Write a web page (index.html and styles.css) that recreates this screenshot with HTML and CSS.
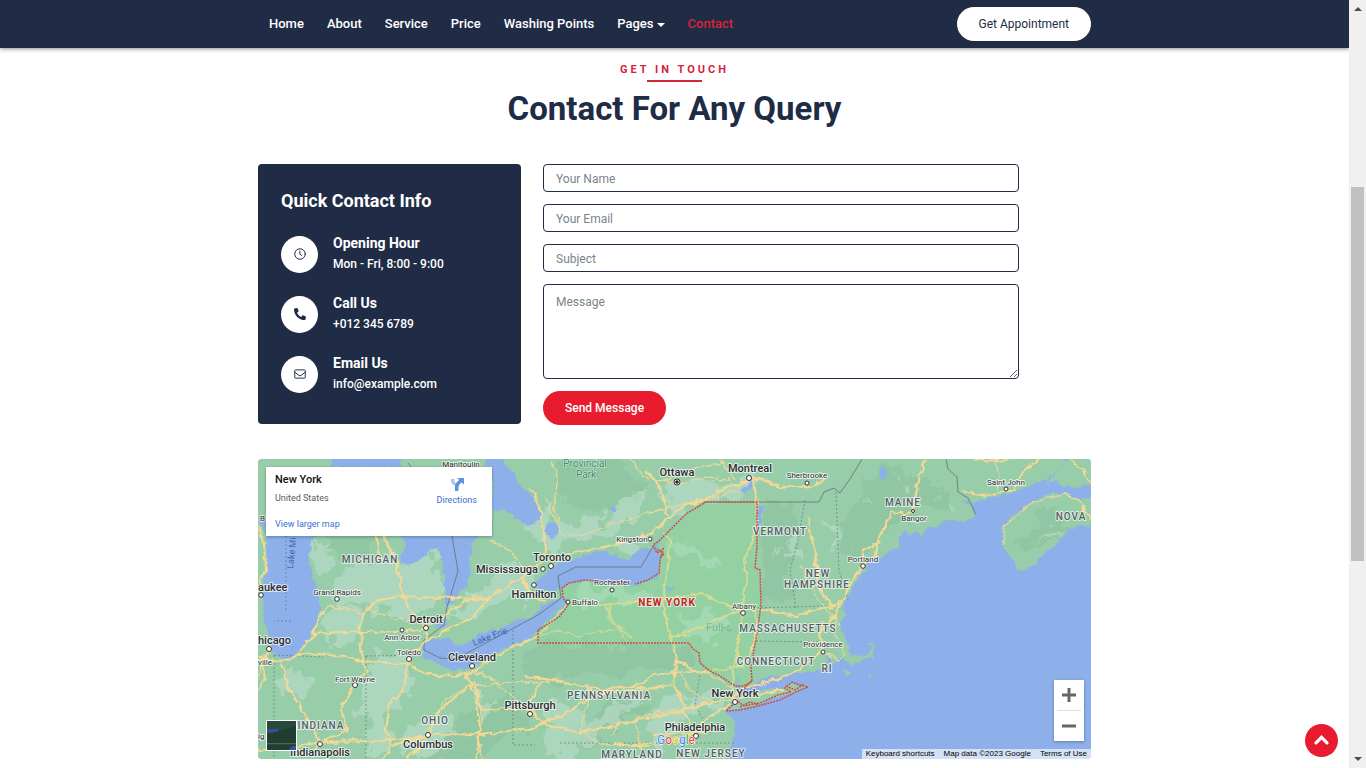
FILE: index.html
```html
<!DOCTYPE html>
<html lang="en">
<head>
<meta charset="utf-8">
<meta name="viewport" content="width=device-width, initial-scale=1">
<title>Contact For Any Query</title>
<link rel="stylesheet" href="styles.css">
</head>
<body>
<div class="page">
  <header class="topbar">
    <div class="container topbar-inner">
      <nav class="nav" aria-label="Main">
        <a href="#home">Home</a>
        <a href="#about">About</a>
        <a href="#service">Service</a>
        <a href="#price">Price</a>
        <a href="#points">Washing Points</a>
        <a href="#pages" class="has-menu">Pages</a>
        <a href="#contact" class="active">Contact</a>
      </nav>
      <a class="pill pill-light" href="#appointment">Get Appointment</a>
    </div>
  </header>

  <main class="container">
    <div class="section-head">
      <p class="eyebrow">Get In Touch</p>
      <h1>Contact For Any Query</h1>
    </div>

    <div class="contact">
      <section class="info">
        <h2>Quick Contact Info</h2>
        <ul class="info-list">
          <li>
            <span class="disc"><svg viewBox="0 0 16 16" fill="none" stroke="currentColor" stroke-width="1.300" stroke-linecap="round"><circle cx="8" cy="8" r="7"/><path d="M7.800 4v4.200l2.400 1.600"/></svg></span>
            <div><h3>Opening Hour</h3><p>Mon - Fri, 8:00 - 9:00</p></div>
          </li>
          <li>
            <span class="disc"><svg viewBox="0 0 512 512" fill="currentColor"><path d="M18.600 24.300L122.600 .3c11.300-2.600 22.900 3.300 27.500 13.900l48 112c4.200 9.800 1.400 21.300-6.900 28l-60.600 49.600c36 76.700 98.900 140.500 177.200 177.200l49.600-60.600c6.800-8.300 18.200-11.100 28-6.900l112 48C508 366.100 513.900 377.700 511.300 389l-24 104C484.800 503.800 475.200 512 464 512 207.900 512 0 304.500 0 48c0-11.200 7.700-20.800 18.600-23.700z"/></svg></span>
            <div><h3>Call Us</h3><p>+012 345 6789</p></div>
          </li>
          <li>
            <span class="disc"><svg viewBox="0 0 16 16" fill="none" stroke="currentColor" stroke-width="1.300" stroke-linejoin="round"><rect x="1" y="2.500" width="14" height="11" rx="1"/><path d="M1 5.500l5.600 4.400q1.400 1 2.800 0L15 5.500"/></svg></span>
            <div><h3>Email Us</h3><p>info@example.com</p></div>
          </li>
        </ul>
      </section>

      <form class="form">
        <input class="field" type="text" placeholder="Your Name" aria-label="Your Name">
        <input class="field" type="email" placeholder="Your Email" aria-label="Your Email">
        <input class="field" type="text" placeholder="Subject" aria-label="Subject">
        <textarea class="field field-area" placeholder="Message" aria-label="Message"></textarea>
        <button class="pill pill-red" type="submit">Send Message</button>
      </form>
    </div>

    <section class="map" aria-label="Map of New York">
      <svg class="map-canvas" viewBox="258 459 833 300" preserveAspectRatio="xMidYMid slice" role="img" aria-label="New York, United States">
        <defs>
          <!-- roughens straight edges into natural shorelines and terrain -->
          <filter id="shore" x="-5%" y="-5%" width="110%" height="110%" color-interpolation-filters="sRGB"><feTurbulence type="fractalNoise" baseFrequency="0.12" numOctaves="3" seed="4"/><feDisplacementMap in="SourceGraphic" scale="7" xChannelSelector="R" yChannelSelector="G"/></filter>
          <filter id="terrain" x="-5%" y="-5%" width="110%" height="110%" color-interpolation-filters="sRGB"><feTurbulence type="fractalNoise" baseFrequency="0.05" numOctaves="4" seed="9"/><feDisplacementMap in="SourceGraphic" scale="38" xChannelSelector="R" yChannelSelector="G"/></filter>
          <clipPath id="inland"><path d="M240 440H1066L1042 482 1004 496 985 499 976 517 937 526 917 530 899 547 882 557 866 568 853 588 842 609 843 634 849 655 827 666 780 674 745 688 726 712 735 719 735 732 727 780H240ZM1003 547L1001 535 1013 515 1050 494 1091 491V524L1066 531 1026 571 1015 564Z"/></clipPath>
        </defs>
        <rect class="water" x="258" y="459" width="833" height="300"/>
        <!-- mainland -->
        <g class="land" filter="url(#shore)">
          <path d="M240 440H1076L1066 459 1058 469 1042 482 1024 488 1004 496 985 499 972 504 962 499 971 507 976 517 966 519 952 523 944 521 937 528 928 526 922 534 917 531 910 535 904 531 899 539 899 549 888 550 882 558 873 557 866 568 860 575 853 588 846 598 842 609 848 615 839 624 843 634 849 645 850 657 866 654 872 649 868 642 873 645 874 657 860 660 851 665 846 659 840 654 836 663 827 668 812 671 798 674 776 676 761 680 748 688 735 698 726 712 735 719 735 732 730 748 727 780H240Z"/>
          <path d="M1003 547L1001 535 1004 525 1013 515 1031 503 1050 494 1066 493 1080 500 1110 491V524L1076 526 1066 531 1059 542 1043 555 1034 563 1026 571 1018 572 1015 564ZM1110 440V483L1072 488 1060 483 1045 482 1056 471 1068 459 1072 440Z"/>
        </g>
        <!-- shaded terrain -->
        <g clip-path="url(#inland)">
        <g class="forest" filter="url(#terrain)">
          <path d="M572 459H620L640 480 655 496 638 502 600 512 580 507 555 490 548 470ZM535 645L685 643 694 668 672 675 650 668 620 680 590 674 540 681 520 670ZM764 502L795 503 790 540 784 575 788 600 768 610 762 580ZM870 475L900 468 940 480 940 508 900 524 850 560 845 530Z"/>
          <path d="M315 515L382 530 376 550 340 560 326 548ZM460 715L515 690 525 720 480 759 430 759ZM590 715L640 690 655 700 590 750 565 759 560 740ZM1010 540L1050 510 1070 520 1050 545 1025 560Z"/>
        </g>
        <g class="pale" filter="url(#terrain)">
          <path d="M330 575L382 558 397 566 424 553 438 551 442 580 432 603 402 617 374 606 338 611 324 594ZM322 610L366 615 370 630 322 647ZM367 660L407 650 416 663 405 695 388 710 386 745 366 757 364 700ZM313 550L322 540 328 556 322 572 314 568ZM480 585L512 561 530 569 524 593 492 607 465 620 454 616ZM614 543L640 538 635 556 622 554Z"/>
          <path d="M520 520L550 504 560 525 600 519 620 500 653 492 640 512 612 530 566 545 535 540ZM656 492L700 473 727 484 753 475 748 500 706 500 680 513ZM570 592L612 584 653 587 655 602 610 601 588 607ZM665 548L684 540 714 552 725 570 702 560ZM550 700L600 720 640 686 646 697 603 735 570 759H552ZM648 715L668 696 711 690 720 702 680 720 662 749 647 759ZM273 682L300 668 307 689 293 704ZM414 727L444 716 452 740 433 759H405ZM775 548L798 540 806 558 790 555Z"/>
          <path d="M1035 546L1040 536 1050 538 1064 521 1048 530ZM895 477L910 485 902 489ZM940 505L947 513 943 520ZM866 496L875 499 872 504ZM825 520L842 537 838 548ZM676 618L721 614 736 631 714 640 690 632ZM465 700L488 697 498 710 482 717Z"/>
        </g>
        </g>
        <!-- lakes -->
        <g class="water" filter="url(#shore)">
          <path d="M266 530L267 560 264 590 263 615 269 636 272 652 279 659 292 658 304 648 313 632 319 614 319 594 312 575 309 556 311 542 318 530Z"/>
          <path d="M258 520H266V535L260 520ZM400 530L405 545 399 563 405 567 417 562 429 550 438 548 442 558 445 586 445 606 454 600 462 592 471 577 469 558 473 544 479 532 492 512 503 510 516 518 529 526 535 523 538 514 537 504 528 492 518 484 514 473 506 466 497 450H485V467H400V450H330V467H420L450 467 492 467V536Z"/>
          <path d="M421 658L422 645 430 638 448 639 460 646 471 642 478 634 499 629 520 620 532 617 542 606 556 600 569 598 561 611 547 621 538 630 527 639 510 646 491 655 472 668 450 671 434 661ZM437 620L448 619 444 628 434 629Z"/>
          <path d="M535 586L543 577 551 567 565 561 588 555 608 550 618 558 629 559 635 550 650 548 662 538 658 549 664 555 659 566 660 575 650 579 639 586 605 584 585 580 567 586 551 592 536 588Z"/>
          <path d="M530 501L537 508 542 517 534 519ZM547 523L558 523 559 532 551 538 545 532ZM757 505H764L761 522 756 533 755 515ZM740 490L752 481 755 486 745 494ZM664 588L675 586 671 593ZM881 463L886 472 884 481 880 472ZM737 676H739V693L736 692ZM610 506L616 508 611 512ZM821 566L827 571 824 574ZM827 651L831 661 825 666Z"/>
        </g>
        <path class="land" d="M843 669L852 673 846 676ZM868 674L873 676 869 678ZM726 711L744 696 766 689 783 689 790 683 798 686 810 685 792 693 770 699 755 706Z"/>
        <!-- thin regional borders -->
        <g class="border-dash">
          <path d="M274 655V759M274 655L323 657M366 656V759M366 656L421 655M513 630V745H535M560 743H735M836 492L839 570 848 600M753 608L825 606M752 641L820 642M805 500L798 540 790 570 796 610M700 675L695 705 711 735M291 621H274M286 536V610"/>
        </g>
        <g class="border">
          <path d="M408 463L414 470M452 536L458 571 447 607 444 625 424 640 424 650 440 658 456 659 538 615 561 598 558 576 576 567H641L654 545M703 502H819L824 492 834 488 840 493 850 479 862 459M946 459L948 469 957 477 958 492 968 498 976 515"/>
        </g>
        <!-- secondary roads -->
        <g class="road road-thin" filter="url(#shore)">
          <path d="M545 498L556 520 562 535 580 536 600 528 640 515 680 505 740 490M660 480L680 484 700 478 730 479M530 575L520 565 512 552 490 540M551 459L558 480 553 505 560 522M630 459L640 473 654 480 672 479 690 470 722 463 735 480M258 677L264 655M320 612L330 607 350 609 365 615M366 607L395 619 430 620M606 605L612 622 635 641M538 639L555 630 580 637 600 631 625 628M612 602L608 616 620 630 627 642M610 602L608 620"/>
          <path d="M675 670L710 673 735 690M680 672L690 690 720 705M674 685L630 690 590 694M590 694L585 710 581 731M581 731L600 745 660 744 704 730M610 737L618 725 650 714 700 706M637 724L643 759M466 672L487 675 499 686 513 697 526 709M470 686L500 684 510 682H550M476 686L482 710 479 740 482 759M468 686L446 700 427 731M820 603L833 615 839 625M822 621L820 640M810 640L823 651 832 659M833 630L842 645 846 655 838 660 824 651"/>
          <path d="M1003 545L1003 528 1012 519 1030 504 1050 497 1065 493M995 459L999 475 997 490M807 516L815 550 820 580 824 600M800 566L808 580 819 600"/>
        </g>
        <!-- highways -->
        <g class="road" filter="url(#shore)">
          <path d="M258 660L281 662 300 655 320 654 345 656 361 661 407 663 421 672 440 676 470 674 492 658 520 644 538 636 560 611 572 601 610 604 662 600 700 593 718 602 742 609 760 610 795 616 810 612 832 606"/>
          <path d="M281 662L290 690 308 720 320 742M320 742L347 731 341 710 356 680 366 672 361 650 360 625 366 610 378 600 400 597 460 598 488 600M320 742L380 741 428 735 480 734 530 729 570 711 595 694 640 689 665 688M428 735L392 745 383 759M320 742L290 748 258 750M275 738L300 725M428 735L439 712 465 689 476 680"/>
          <path d="M313 634L340 632 374 632 420 630 433 622 455 609 475 595 487 600 500 590 517 580 535 568 544 560 556 558 590 550 625 542 653 533 668 517 686 505 705 500 718 491 740 484 754 478 785 487 807 487 825 480"/>
          <path d="M530 487L538 500 544 530 545 556M662 534L670 540 668 565 663 590 664 610 670 637 677 660 673 682 681 700 690 724M677 660L695 672 720 670 745 665 752 650 757 625 753 608M674 672L655 675 640 685 605 690 590 688 550 680 525 676"/>
          <path d="M380 530L388 545 397 562 401 585 408 607 425 628 427 640 411 655 407 663 404 690 390 702 386 730 392 745M324 610L313 634 300 652M466 675L482 710 500 709 530 709 545 725 580 732 610 727 638 720 672 713 705 704 732 700"/>
          <path d="M732 700L758 694 784 690M732 700L740 690 760 684 780 678 799 670 823 650 820 632 835 615 840 604 850 586 861 567 875 555 878 540 893 511 913 513M912 513L919 480 925 459M732 700L733 672 739 640 742 611M742 609L747 580 744 560 755 535 757 505 754 480M690 735L708 718 732 704M810 530L815 555 819 588 832 608 840 603"/>
          <path d="M258 525L264 545 266 570 258 592M258 656L274 660M269 650L262 665 265 678 258 690M320 742L310 759M427 736L417 750 405 759M476 683L479 730 477 759M654 735L690 733 710 731M670 637L700 628 725 616 742 609M541 682L525 709M862 567L862 550 880 543M962 492L985 496 1000 493 1015 489 1019 475 1040 459M1065 493L1080 502 1091 520M1070 459L1080 468 1091 482M970 459L1000 461 1010 459M667 515L660 487 646 470"/>
          <path d="M376 530L381 560M486 601L475 616 448 630 427 640M530 565L522 578 530 595 545 602M615 743L650 747M672 636H688"/>
        </g>
        <!-- New York state -->
        <path class="state-fill" d="M538 630V643H689L700 655 703 668 737 686 752 681 750 650 761 608 757 570 755 545 757 502H706L670 530 655 545 661 560 659 573 640 583 611 584 584 580 563 585 562 600Z"/>
        <path class="state" d="M538 630V643H689L693 649 699 653 700 663 710 671 720 676 735 686 744 686 752 681 751 667 758 627 761 604 760 570 755 568 757 547 757 502H706L686 514 670 530 659 541 653 545 657 553 663 549 660 560 659 573 648 580 635 584M630 584L610 582 584 580 569 583 562 588 563 598 568 605 560 616 548 624 538 630"/>
        <path class="state" d="M737 701L726 711 740 710 758 706 780 700 798 691 808 687 800 685 792 682 785 688 791 692 778 695 760 703 744 706 737 701M657 549L664 554 660 558M752 681L745 687 744 695M740 707L750 702 758 704M786 686L795 690 804 684"/>
        <!-- city markers -->
        <g class="town">
          <circle cx="261" cy="595" r="2.300"/><circle cx="337" cy="599" r="2.300"/><circle cx="269" cy="649" r="2.500"/><circle cx="402" cy="630" r="2"/><circle cx="426" cy="628" r="2.500"/><circle cx="409" cy="659" r="2.500"/><circle cx="355" cy="685" r="2.500"/><circle cx="472" cy="666" r="2.500"/><circle cx="428" cy="735" r="2.500"/><circle cx="320" cy="744" r="2.500"/><circle cx="530" cy="714" r="2.500"/><circle cx="551" cy="566" r="2.500"/><circle cx="543" cy="569" r="2.300"/><circle cx="534" cy="585" r="2.300"/><circle cx="568" cy="602" r="2"/><circle cx="612" cy="590" r="2"/><circle cx="650" cy="539" r="2"/><circle cx="749" cy="478" r="2.500"/><circle cx="807" cy="483" r="2"/><circle cx="743" cy="613" r="2.300"/><circle cx="735" cy="702" r="2.500"/><circle cx="696" cy="736" r="2.500"/><circle cx="823" cy="652" r="2"/><circle cx="863" cy="566" r="2.300"/><circle cx="913" cy="511" r="1.500"/><circle cx="1006" cy="489" r="2"/><circle cx="677" cy="482" r="3"/>
        </g>
        <circle cx="677" cy="482" r="1.800" fill="#222"/>
        <!-- labels -->
        <g class="label region">
          <text x="370" y="563">MICHIGAN</text><text x="321" y="729">INDIANA</text><text x="435" y="724">OHIO</text><text x="609" y="699">PENNSYLVANIA</text><text x="632" y="758">MARYLAND</text><text x="711" y="757">NEW JERSEY</text><text x="780" y="535">VERMONT</text><text x="903" y="506">MAINE</text><text x="818" y="577">NEW</text><text x="817" y="588">HAMPSHIRE</text><text x="788" y="632">MASSACHUSETTS</text><text x="776" y="665">CONNECTICUT</text><text x="827" y="672">RI</text><text x="1071" y="520">NOVA</text>
        </g>
        <g class="label city">
          <text x="677" y="476">Ottawa</text><text x="750" y="472">Montreal</text><text x="552" y="561">Toronto</text><text x="507" y="573">Mississauga</text><text x="534" y="598">Hamilton</text><text x="426" y="623">Detroit</text><text x="472" y="661">Cleveland</text><text x="428" y="748">Columbus</text><text x="320" y="756">Indianapolis</text><text x="530" y="709">Pittsburgh</text><text x="735" y="697">New York</text><text x="695" y="731">Philadelphia</text><text class="from-left" x="258" y="644">hicago</text><text class="from-left" x="258" y="591">aukee</text>
        </g>
        <g class="label small">
          <text x="461" y="467">Manitoulin</text><text x="337" y="595">Grand Rapids</text><text x="402" y="640">Ann Arbor</text><text x="409" y="655">Toledo</text><text x="355" y="682">Fort Wayne</text><text x="632" y="542">Kingston</text><text x="612" y="585">Rochester</text><text x="585" y="605">Buffalo</text><text x="744" y="609">Albany</text><text x="807" y="478">Sherbrooke</text><text x="823" y="647">Providence</text><text x="863" y="562">Portland</text><text x="914" y="521">Bangor</text><text x="1006" y="485">Saint John</text><text class="from-left" x="258" y="665">ville</text><text class="from-left" x="258" y="739">ig</text><text class="from-left" x="260" y="521">B</text>
        </g>
        <g class="park"><text x="585" y="467">Provincial</text><text x="586" y="478">Park</text></g>
        <text class="lake" transform="translate(474 646) rotate(-21)">Lake Erie</text>
        <text class="lake" transform="translate(293 569) rotate(-84)">Lake Mi</text>
        <text class="label ny" x="667" y="606">NEW YORK</text>
        <text class="ghost" x="706" y="631">Full-s</text>
        <text class="google" x="657" y="744"><tspan fill="#4285f4">G</tspan><tspan fill="#ea4335">o</tspan><tspan fill="#fbbc05">o</tspan><tspan fill="#4285f4">g</tspan><tspan fill="#34a853">l</tspan><tspan fill="#ea4335">e</tspan></text>
      </svg>

      <div class="place">
        <div class="place-text">
          <strong>New York</strong>
          <span>United States</span>
          <a href="#larger">View larger map</a>
        </div>
        <a class="directions" href="#directions">
          <svg viewBox="0 0 16 16" width="16" height="16"><path d="M2 3h3.500v2.500Q5.500 7 8 8.500V15H6V9.500Q2 8 2 5z" fill="#a8c7f5"/><path d="M6 15V9.500Q6 8 7.500 6.500L10 4 8.500 2H15v6.500L12.500 6.500 10.500 8.500Q9.500 9.500 9.500 11V15z" fill="#5b93e0"/></svg>
          Directions
        </a>
      </div>

      <button class="satellite" type="button" aria-label="Show satellite imagery">
        <svg viewBox="0 0 28 28"><rect width="28" height="28" fill="#264a38"/><path d="M0 13L28 5V28H0z" fill="#1f3d31"/><path d="M0 8h9l2-1v3l-6 1H0zM22 26l3-2h3v4h-7z" fill="#34529a"/><path d="M0 22h28" stroke="#557a4d"/></svg>
      </button>

      <div class="zoom">
        <button type="button" aria-label="Zoom in"><svg viewBox="0 0 14 14"><path d="M7 0V14M0 7H14"/></svg></button>
        <button type="button" aria-label="Zoom out"><svg viewBox="0 0 14 14"><path d="M0 7H14"/></svg></button>
      </div>

      <div class="credits">
        <button type="button">Keyboard shortcuts</button>
        <span>Map data ©2023 Google</span>
        <a href="#terms">Terms of Use</a>
      </div>
    </section>
  </main>

  <a class="to-top" href="#top" aria-label="Back to top"><svg viewBox="0 0 16 16"><path d="M2.800 10.200L8 5l5.200 5.200"/></svg></a>
</div>

<div class="scrollbar" aria-hidden="true">
  <svg viewBox="0 0 8 4"><path d="M0 4L4 0l4 4z"/></svg>
  <div class="track"><div class="thumb"></div></div>
  <svg viewBox="0 0 8 4"><path d="M0 0h8L4 4z"/></svg>
</div>
</body>
</html>
```
FILE: styles.css
```css
:root {
  --navy: #202c45;
  --red: #e81c2e;
}

* {
  box-sizing: border-box;
}

body {
  display: flex;
  min-height: 100vh;
  margin: 0;
  background: #fff;
  color: var(--navy);
  font: 12px/18px Roboto, "Liberation Sans", sans-serif;
}

h1, h2, h3, p, ul {
  margin: 0;
  padding: 0;
}

a {
  color: inherit;
  text-decoration: none;
}

button {
  border: 0;
  font: inherit;
  cursor: pointer;
}

.page {
  flex: 1;
  min-width: 0;
}

.container {
  width: 100%;
  max-width: 833px;
  margin: 0 auto;
}

/* Top bar */
.topbar {
  background: var(--navy);
  box-shadow: 0 1px 4px rgba(30, 25, 50, 0.5);
}

.topbar-inner {
  display: flex;
  align-items: center;
  justify-content: space-between;
  padding: 7px 0;
}

.nav {
  display: flex;
  gap: 23px;
  padding-left: 11px;
  color: #fff;
  font-size: 13px;
  font-weight: 500;
}

.nav .active {
  color: #dc2336;
}

.has-menu::after {
  content: "";
  display: inline-block;
  margin-left: 3px;
  border: 4px solid transparent;
  border-top-color: currentColor;
  border-bottom: 0;
  vertical-align: middle;
}

.pill {
  padding: 8px 22px;
  border-radius: 17px;
  line-height: 18px;
}

.pill-light {
  background: #fff;
  color: var(--navy);
}

.pill-red {
  align-self: flex-start;
  background: var(--red);
  color: #fff;
  font-weight: 500;
}

/* Heading */
.section-head {
  padding: 12px 0 34px;
  text-align: center;
}

.eyebrow {
  color: #d32638;
  font-size: 11px;
  font-weight: 700;
  letter-spacing: 3px;
  line-height: 20px;
  text-transform: uppercase;
}

.eyebrow::after {
  content: "";
  display: block;
  width: 55px;
  height: 2px;
  margin: 0 auto;
  background: currentColor;
}

h1 {
  padding-top: 6px;
  font-size: 33px;
  font-weight: 700;
  line-height: 42px;
}

/* Contact block */
.contact {
  display: grid;
  grid-template-columns: 263fr 548fr;
  gap: 22px;
  align-items: start;
}

.info {
  padding: 25px 23px 29px;
  border-radius: 4px;
  background: var(--navy);
  color: #fff;
}

.info h2 {
  font-size: 18px;
  font-weight: 700;
  line-height: 24px;
}

.info-list {
  display: grid;
  gap: 18px;
  padding-top: 20px;
  list-style: none;
}

.info-list li {
  display: flex;
  align-items: center;
  gap: 15px;
}

.info-list h3 {
  font-size: 14px;
  font-weight: 700;
  line-height: 21px;
}

.info-list p {
  font-weight: 500;
  line-height: 21px;
}

.disc {
  display: grid;
  place-items: center;
  width: 37px;
  height: 37px;
  border-radius: 50%;
  background: #fff;
  color: var(--navy);
}

.disc svg {
  width: 12px;
  height: 12px;
}

.form {
  display: flex;
  flex-direction: column;
  gap: 12px;
  padding-right: 72px;
}

.field {
  width: 100%;
  height: 28px;
  padding: 1px 12px 0;
  border: 1px solid var(--navy);
  border-radius: 4px;
  background: #fff;
  color: var(--navy);
  font: inherit;
}

.field::placeholder {
  color: #7b838a;
}

.field-area {
  display: block;
  height: 95px;
  padding: 8px 12px;
}

/* Map */
.map {
  position: relative;
  height: 300px;
  margin-top: 34px;
  overflow: hidden;
  border-radius: 4px;
}

.map-canvas {
  display: block;
  width: 100%;
  height: 100%;
}

.water { fill: #8db0ea; }
.land { fill: #98cdaa; }
.forest { fill: #8ec49f; opacity: 0.7; }
.pale { fill: #b7dbc6; opacity: 0.7; }
.state-fill { fill: #84e090; opacity: 0.25; }

.state {
  fill: none;
  stroke: #cf4a45;
  stroke-width: 1.5;
  stroke-dasharray: 2 1;
}

.border,
.border-dash {
  fill: none;
  stroke: #60726f;
  stroke-width: 0.8;
}

.border-dash {
  stroke-dasharray: 2 2;
  opacity: 0.8;
}

.road {
  fill: none;
  stroke: #f5d993;
  stroke-width: 2;
  stroke-linejoin: round;
}

.road-thin {
  stroke: #e8d79a;
  stroke-width: 1.3;
}

.town {
  fill: #fff;
  stroke: #333;
}

.label {
  fill: #2b2d30;
  stroke: rgba(255, 255, 255, 0.7);
  stroke-width: 2px;
  stroke-linejoin: round;
  paint-order: stroke;
  text-anchor: middle;
  font-weight: 500;
}

.region {
  fill: #535e65;
  font-size: 10px;
  letter-spacing: 1px;
}

.city { font-size: 11px; }

.small {
  font-size: 8px;
  font-weight: 400;
}

.from-left { text-anchor: start; }

.ny {
  fill: #c5221f;
  font-size: 10px;
  font-weight: 700;
  letter-spacing: 1px;
}

.park {
  fill: #3e8a63;
  stroke: #d3ebdd;
  stroke-width: 1px;
  paint-order: stroke;
  text-anchor: middle;
  font-size: 10px;
}

.lake {
  fill: #3f68b5;
  font-size: 9px;
}

.ghost {
  fill: #5f8f72;
  opacity: 0.5;
  font-size: 11px;
}

.google {
  stroke: #fff;
  stroke-width: 1px;
  paint-order: stroke;
  font-size: 12px;
}

.place {
  position: absolute;
  top: 8px;
  left: 8px;
  display: flex;
  justify-content: space-between;
  width: 226px;
  padding: 6px 15px 5px 9px;
  background: #fff;
  box-shadow: 0 1px 3px rgba(0, 0, 0, 0.3);
  color: #5b5b5b;
  font-size: 9px;
}

.place-text {
  display: grid;
  line-height: 14px;
}

.place strong {
  padding-bottom: 4px;
  color: #111;
  font-size: 11px;
  font-weight: 500;
}

.place-text a {
  padding-top: 12px;
}

.place a {
  color: #3a6fd0;
}

.directions {
  display: grid;
  align-content: start;
  justify-items: center;
  gap: 2px;
  padding-top: 3px;
  line-height: 12px;
}

.satellite {
  position: absolute;
  bottom: 8px;
  left: 8px;
  width: 31px;
  height: 31px;
  padding: 0;
  border: 1px solid #fff;
}

.satellite svg {
  display: block;
  width: 100%;
  height: 100%;
}

.zoom {
  position: absolute;
  right: 7px;
  bottom: 18px;
  width: 30px;
  padding: 0 3px;
  background: #fff;
  box-shadow: 0 1px 3px rgba(0, 0, 0, 0.3);
}

.zoom button {
  display: grid;
  place-items: center;
  width: 100%;
  height: 30px;
  padding: 0;
  background: none;
}

.zoom button + button {
  height: 31px;
  border-top: 1px solid #e0e0e0;
}

.zoom svg {
  width: 14px;
  height: 14px;
  stroke: #666;
  stroke-width: 3;
}

.credits {
  position: absolute;
  right: 0;
  bottom: 0;
  display: flex;
  gap: 9px;
  padding: 0 4px;
  background: rgba(235, 240, 250, 0.75);
  color: #000;
  font-family: "Liberation Sans", sans-serif;
  font-size: 8px;
  line-height: 10px;
}

.credits button {
  padding: 0;
  background: none;
}

/* Back to top */
.to-top {
  position: fixed;
  right: 28px;
  bottom: 11px;
  display: grid;
  place-items: center;
  width: 33px;
  height: 33px;
  border-radius: 50%;
  background: var(--red);
}

.to-top svg {
  width: 17px;
  height: 17px;
  fill: none;
  stroke: #fff;
  stroke-width: 3;
  stroke-linecap: round;
}

/* Scroll bar */
.scrollbar {
  position: sticky;
  top: 0;
  display: flex;
  flex-direction: column;
  align-items: center;
  width: 17px;
  height: 100vh;
  padding: 7px 2px;
  background: #f0f0f0;
}

.scrollbar svg {
  width: 8px;
  height: 4px;
  fill: #4d4d4d;
}

.track {
  flex: 1;
  width: 100%;
  padding: 6px 0;
}

.thumb {
  height: 51%;
  margin-top: 170px;
  background: #c1c1c1;
}
```
